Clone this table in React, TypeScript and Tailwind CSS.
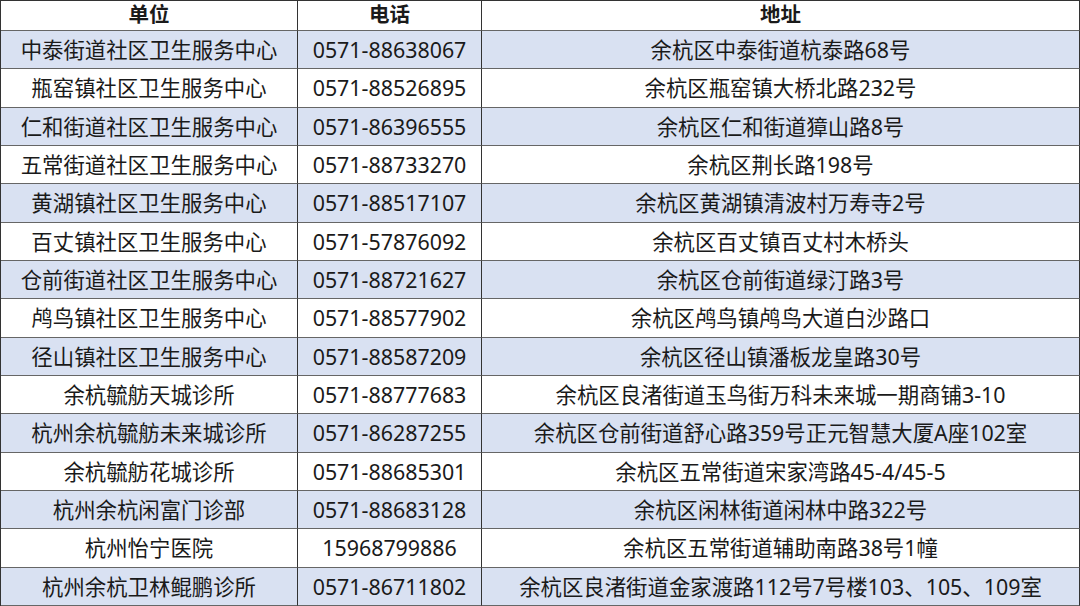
const rows = [
  ["中泰街道社区卫生服务中心", "0571-88638067", "余杭区中泰街道杭泰路68号"],
  ["瓶窑镇社区卫生服务中心", "0571-88526895", "余杭区瓶窑镇大桥北路232号"],
  ["仁和街道社区卫生服务中心", "0571-86396555", "余杭区仁和街道獐山路8号"],
  ["五常街道社区卫生服务中心", "0571-88733270", "余杭区荆长路198号"],
  ["黄湖镇社区卫生服务中心", "0571-88517107", "余杭区黄湖镇清波村万寿寺2号"],
  ["百丈镇社区卫生服务中心", "0571-57876092", "余杭区百丈镇百丈村木桥头"],
  ["仓前街道社区卫生服务中心", "0571-88721627", "余杭区仓前街道绿汀路3号"],
  ["鸬鸟镇社区卫生服务中心", "0571-88577902", "余杭区鸬鸟镇鸬鸟大道白沙路口"],
  ["径山镇社区卫生服务中心", "0571-88587209", "余杭区径山镇潘板龙皇路30号"],
  ["余杭毓舫天城诊所", "0571-88777683", "余杭区良渚街道玉鸟街万科未来城一期商铺3-10"],
  ["杭州余杭毓舫未来城诊所", "0571-86287255", "余杭区仓前街道舒心路359号正元智慧大厦A座102室"],
  ["余杭毓舫花城诊所", "0571-88685301", "余杭区五常街道宋家湾路45-4/45-5"],
  ["杭州余杭闲富门诊部", "0571-88683128", "余杭区闲林街道闲林中路322号"],
  ["杭州怡宁医院", "15968799886", "余杭区五常街道辅助南路38号1幢"],
  ["杭州余杭卫林鲲鹏诊所", "0571-86711802", "余杭区良渚街道金家渡路112号7号楼103、105、109室"],
];

const headers = ["单位", "电话", "地址"];

export default function App() {
  return (
    <div className="h-[606px] w-[1080px] overflow-hidden bg-white">
      <div
        className="grid h-[606px] w-[1080px] grid-cols-[297px_184px_1fr] grid-rows-[30px_repeat(15,1fr)] border-l border-t border-[#333333] text-[21.4px] leading-none text-[#1a1a1a]"
        style={{ fontFamily: '"Noto Sans", "Noto Sans CJK SC", sans-serif' }}
      >
        {headers.map((h) => (
          <div
            key={h}
            className="flex items-center justify-center border-b border-r border-b-[#666666] border-r-[#333333] pb-[2px] text-[20.5px] font-bold"
          >
            {h}
          </div>
        ))}
        {rows.map((row, i) =>
          row.map((cell, j) => (
            <div
              key={`${i}-${j}`}
              className={`flex items-center justify-center whitespace-nowrap border-b border-r border-b-[#666666] border-r-[#333333] ${
                i === rows.length - 1 ? "border-b-[#333333]" : ""
              } ${i % 2 === 0 ? "bg-[#d9e1f2]" : "bg-white"}`}
            >
              {cell}
            </div>
          ))
        )}
      </div>
    </div>
  );
}
